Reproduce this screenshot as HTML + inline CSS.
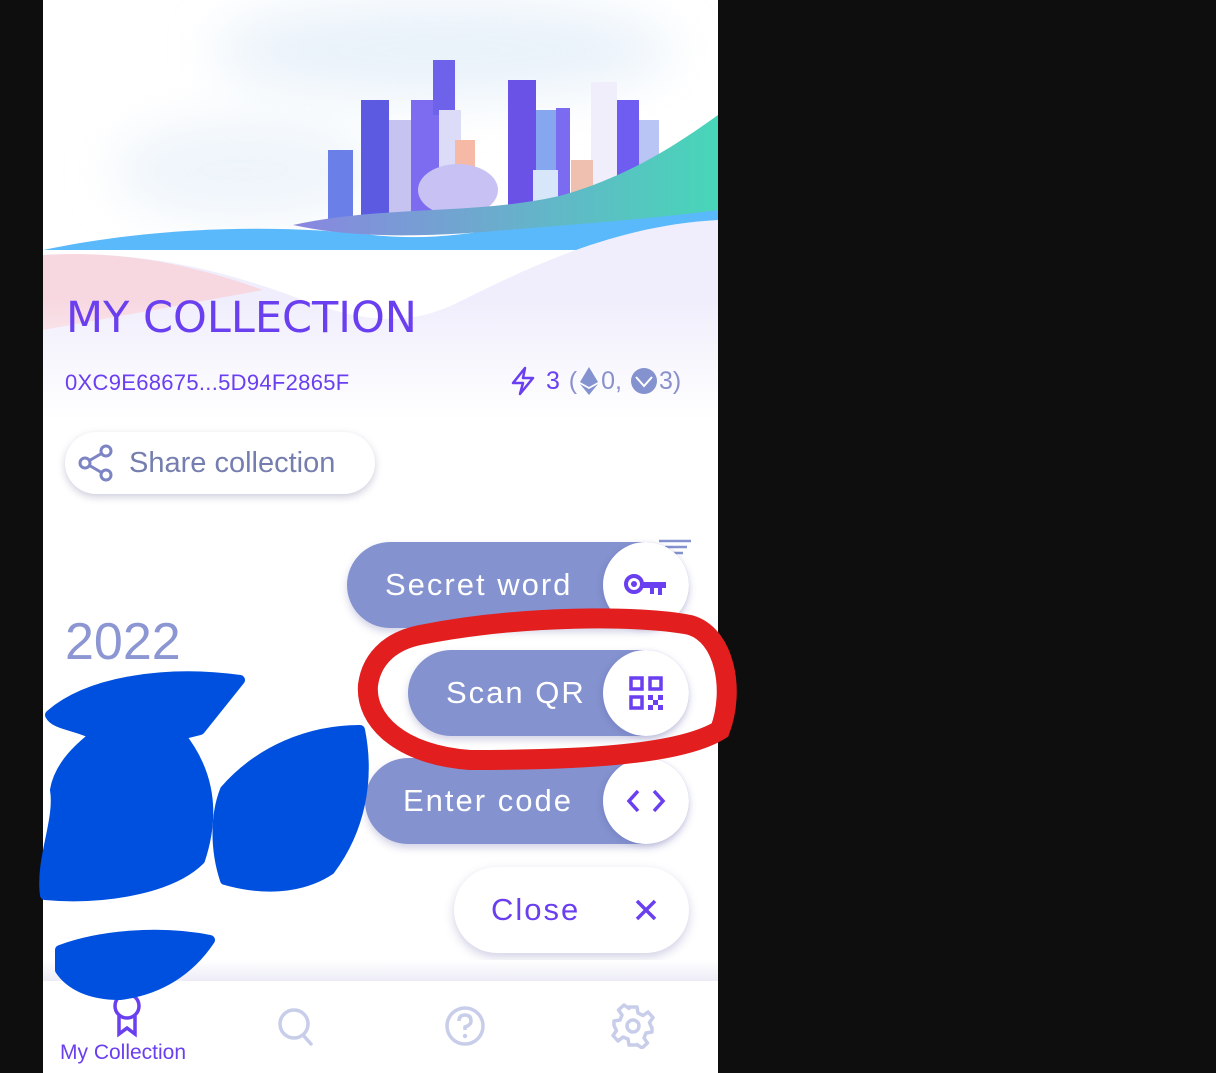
<!DOCTYPE html>
<html><head><meta charset="utf-8"><style>
*{margin:0;padding:0;box-sizing:border-box}
body{width:1216px;height:1073px;background:#0e0e0e;position:relative;overflow:hidden;font-family:"Liberation Sans",sans-serif}
#app{position:absolute;left:43px;top:0;width:675px;height:1073px;background:#fff;overflow:hidden}
.abs{position:absolute}
.pill{position:absolute;height:86px;border-radius:43px;background:#8492cf;box-shadow:0 4px 8px rgba(80,80,160,.25);color:#fff;font-size:31px;letter-spacing:2px;display:flex;align-items:center}
.circ{position:absolute;right:0;top:0;width:86px;height:86px;border-radius:43px;background:#fff;box-shadow:-2px 2px 6px rgba(80,80,160,.2);display:flex;align-items:center;justify-content:center}
</style></head><body>
<div id="app">
<svg class="abs" style="left:0;top:0" width="675" height="420" viewBox="0 0 675 420">
<defs>
<linearGradient id="hill" x1="0" y1="0" x2="1" y2="0"><stop offset="0" stop-color="#8a86e0"/><stop offset="1" stop-color="#48d6b8"/></linearGradient>
<linearGradient id="fade" x1="0" y1="0" x2="0" y2="1"><stop offset="0" stop-color="#fff" stop-opacity="0"/><stop offset="1" stop-color="#fff"/></linearGradient>
<filter id="bl"><feGaussianBlur stdDeviation="25"/></filter>
</defs>
<g filter="url(#bl)" opacity=".6"><ellipse cx="400" cy="50" rx="230" ry="50" fill="#dbeaf7"/><ellipse cx="200" cy="170" rx="130" ry="50" fill="#e3eef8"/></g>
<g>
<rect x="285" y="150" width="25" height="70" fill="#6a7fe8"/>
<rect x="318" y="100" width="28" height="120" fill="#5b5ae0"/>
<rect x="346" y="120" width="22" height="100" fill="#c6c3f0"/>
<rect x="368" y="100" width="28" height="115" fill="#7d6cf0"/>
<rect x="390" y="60" width="22" height="55" fill="#6f62ea"/>
<rect x="396" y="110" width="22" height="110" fill="#dcdcf8"/>
<rect x="465" y="80" width="28" height="140" fill="#6b52e6"/>
<rect x="493" y="110" width="20" height="110" fill="#86a7f0"/>
<rect x="513" y="108" width="14" height="112" fill="#7a6bf0"/>
<rect x="548" y="82" width="26" height="120" fill="#f0eefb"/>
<rect x="574" y="100" width="22" height="110" fill="#6f5cf0"/>
<rect x="596" y="120" width="20" height="80" fill="#b8c5f5"/>
<rect x="490" y="170" width="25" height="50" fill="#d8e6fa"/>
<rect x="412" y="140" width="20" height="60" fill="#f5b9a6"/>
<rect x="528" y="160" width="22" height="50" fill="#efc0b0"/>
</g>
<ellipse cx="415" cy="190" rx="40" ry="26" fill="#c8c2f4"/>
<path d="M0 250 C120 225 240 225 330 235 C420 245 520 220 675 160 L675 250 Z" fill="#5ab9fb"/>
<path d="M250 225 C340 205 440 215 520 195 C590 175 640 140 675 115 L675 210 C600 220 520 225 440 232 C360 238 300 236 250 225Z" fill="url(#hill)"/>
<path d="M0 255 C100 250 180 270 260 300 C340 330 380 320 420 300 C500 260 580 225 675 220 L675 420 L0 420Z" fill="#f0eefc"/>
<path d="M0 255 C80 250 150 265 220 290 L0 330Z" fill="#f9cfd6" opacity=".7"/>
<rect x="0" y="300" width="675" height="120" fill="url(#fade)"/>
</svg>
<div class="abs" style="left:23px;top:293px;font-size:43px;color:#6a3ff0;letter-spacing:0;font-family:'DejaVu Sans',sans-serif">MY COLLECTION</div>
<div class="abs" style="left:22px;top:370px;font-size:22px;color:#6a3ff0;letter-spacing:0.3px">0XC9E68675...5D94F2865F</div>
<div class="abs" style="left:466px;top:366px;font-size:25px;color:#8a90cc;display:flex;align-items:center;gap:2px">
<svg width="28" height="30" viewBox="0 0 28 30"><path d="M16 2 L4 17 H14 L11 28 L24 12 H14 Z" fill="none" stroke="#6a3ff0" stroke-width="2.5" stroke-linejoin="round"/></svg>
<span style="color:#6a3ff0">&nbsp;3</span>&nbsp;(<svg width="20" height="30" viewBox="0 0 20 30"><path d="M10 1 L19 16 L10 21 L1 16Z M1 18 L10 23 L19 18 L10 29Z" fill="#8492cf"/></svg>0,&nbsp;<svg width="26" height="26"><circle cx="13" cy="13" r="13" fill="#8492cf"/><path d="M5 9 L13 18 L21 9" stroke="#fff" stroke-width="2" fill="none"/></svg>3)</div>
<div class="abs" style="left:22px;top:432px;width:310px;height:62px;border-radius:31px;background:#fff;box-shadow:0 3px 8px rgba(90,90,140,.3);display:flex;align-items:center;font-size:29px;color:#757eae">
<svg style="margin:0 14px 0 12px" width="38" height="40" viewBox="0 0 38 40"><g fill="none" stroke="#7d84c4" stroke-width="3"><circle cx="29" cy="8" r="5"/><circle cx="8" cy="20" r="5"/><circle cx="29" cy="32" r="5"/><path d="M12.5 17.5 L24.5 10.5 M12.5 22.5 L24.5 29.5"/></g></svg>Share collection</div>
<div class="abs" style="left:22px;top:612px;font-size:52px;color:#8c96d2">2022</div>
<svg class="abs" style="left:612px;top:538px" width="40" height="20"><path d="M4 3H36M10 9H32M16 15H28" stroke="#8492cf" stroke-width="2.5"/></svg>
<div class="pill" style="left:304px;top:542px;width:342px;padding-left:38px">Secret word<div class="circ"><svg width="46" height="28" viewBox="0 0 46 28"><circle cx="11" cy="13" r="8" fill="none" stroke="#6a3ff0" stroke-width="4"/><circle cx="11" cy="13" r="3" fill="#6a3ff0"/><path d="M19 11 H43 V17 H39 V24 H35 V17 H31 V23 H27 V17 H19Z" fill="#6a3ff0"/></svg></div></div>
<div class="pill" style="left:365px;top:650px;width:281px;padding-left:38px">Scan QR<div class="circ"><svg width="34" height="34" viewBox="0 0 34 34"><g fill="none" stroke="#6a3ff0" stroke-width="3.5"><rect x="2" y="2" width="11" height="11"/><rect x="21" y="2" width="11" height="11"/><rect x="2" y="21" width="11" height="11"/></g><g fill="#6a3ff0"><rect x="19" y="19" width="5" height="5"/><rect x="29" y="19" width="5" height="5"/><rect x="24" y="24" width="5" height="5"/><rect x="19" y="29" width="5" height="5"/><rect x="29" y="29" width="5" height="5"/></g></svg></div></div>
<div class="pill" style="left:322px;top:758px;width:324px;padding-left:38px">Enter code<div class="circ"><svg width="40" height="26" viewBox="0 0 40 26"><path d="M12 3 L3 13 L12 23 M28 3 L37 13 L28 23" fill="none" stroke="#6a3ff0" stroke-width="3.5"/></svg></div></div>
<div class="abs" style="left:411px;top:867px;width:235px;height:86px;border-radius:43px;background:#fff;box-shadow:0 4px 10px rgba(100,100,170,.3);display:flex;align-items:center;font-size:31px;letter-spacing:2px;color:#6a3ff0;padding-left:37px">Close<svg style="position:absolute;right:32px" width="22" height="22"><path d="M2 2L20 20M20 2L2 20" stroke="#6a3ff0" stroke-width="3.5"/></svg></div>
<div class="abs" style="left:0;top:960px;width:675px;height:22px;background:linear-gradient(#fff,#ecebf6)"></div>
<div class="abs" style="left:0;top:981px;width:675px;height:92px;background:#fff"></div>
<svg class="abs" style="left:66px;top:992px" width="36" height="46" viewBox="0 0 36 46"><g fill="none" stroke="#6a3ff0" stroke-width="3.5"><ellipse cx="18" cy="14" rx="12" ry="12"/><path d="M10 24 V42 L18 36 L26 42 V24"/></g></svg>
<div class="abs" style="left:17px;top:1041px;font-size:21px;color:#6a3ff0">My Collection</div>
<svg class="abs" style="left:233px;top:1005px" width="40" height="42"><circle cx="18" cy="19" r="14" fill="none" stroke="#c8cdea" stroke-width="3.5"/><path d="M27 30 L35 39" stroke="#c8cdea" stroke-width="3.5" stroke-linecap="round"/></svg>
<svg class="abs" style="left:400px;top:1005px" width="44" height="42"><circle cx="22" cy="21" r="18" fill="none" stroke="#c8cdea" stroke-width="3.5"/><path d="M16 16 Q16 10 22 10 Q28 10 28 16 Q28 20 22 22 V25" fill="none" stroke="#c8cdea" stroke-width="3.5"/><circle cx="22" cy="31" r="2.2" fill="#c8cdea"/></svg>
<svg class="abs" style="left:567px;top:1003px" width="46" height="46" viewBox="0 0 46 46"><g fill="none" stroke="#c8cdea" stroke-width="3.5" stroke-linejoin="round"><path d="M19 4H27L28 10L33 12.5L38 9L43 14.5L39.5 19.5L41.5 24.5H42V29L36 30L34 35L37.5 40L32 45L27 41.5L27 42H19L18 36L13 34L8 38L3 32.5L6.5 27.5L4 22.5V18L10 17L12 12L8.5 7L14 2L19 5.5Z"/><circle cx="23" cy="23" r="6"/></g></svg>
</div>
<svg class="abs" style="left:0;top:0" width="1216" height="1073">
<g fill="#0050e0" stroke="#0050e0" stroke-linejoin="round" stroke-linecap="round">
<path d="M50 715 C90 680 170 670 240 680 L200 730 L180 735 C200 760 220 800 200 860 C170 890 100 900 45 895 C40 860 60 820 55 790 C60 760 90 740 95 735 C75 725 55 725 50 715Z" stroke-width="10"/>
<path d="M225 790 C260 750 310 730 360 730 C370 780 360 830 330 870 C300 890 260 890 225 880 C215 850 215 815 225 790Z" stroke-width="10"/>
<path d="M60 950 C100 935 160 930 210 940 C190 970 160 990 120 995 C90 995 70 985 60 970Z" stroke-width="10"/>
</g>
<path d="M420 635 C520 615 640 615 690 625 C725 635 735 690 720 730 C680 755 580 760 470 760 C400 755 365 720 368 685 C372 655 395 640 420 635Z" fill="none" stroke="#e21e1e" stroke-width="20"/>
</svg>
</body></html>
